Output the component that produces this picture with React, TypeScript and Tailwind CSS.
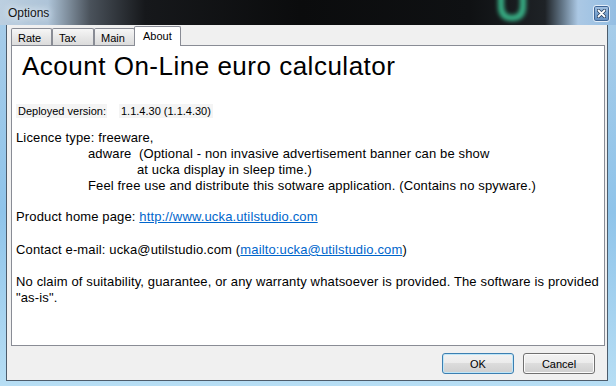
export default function App() {
  const tabs = [
    { name: "Rate", w: "w-[41px]" },
    { name: "Tax", w: "w-[42px]" },
    { name: "Main", w: "w-[41px]" },
  ]

  return (
    <div className="w-[616px] h-[386px] overflow-hidden flex flex-col bg-[linear-gradient(to_bottom,#a9cde9,#8fc4ea_55%,#b7def4)] font-['Liberation_Sans',Arial,sans-serif] text-black">
      {/* title bar */}
      <div className="relative h-[25px] shrink-0 bg-[linear-gradient(to_right,#bccfe0_0px,#aec4d8_48px,#4a525b_90px,#16181b_145px,#0b0c0d_300px,#0f1113_470px,#1e2226_545px,#667a8c_563px,#abc8e4_578px,#94bee3_616px)]">
        <span className="absolute left-[8px] top-[5px] text-[12px] leading-[16px] text-[#141414] [text-shadow:0_0_6px_#e8f0f8,0_0_10px_#e8f0f8]">
          Options
        </span>
        <svg className="absolute left-[495px] top-[-6px] blur-[2px] opacity-90" width="34" height="30" viewBox="0 0 34 30">
          <path d="M6 0 V12 Q6 24 17 24 Q28 24 28 12 V0" fill="none" stroke="#3cc393" strokeWidth="6" />
        </svg>
        <div className="absolute left-[593px] top-[5px] w-[17px] h-[17px] rounded-[3px] border border-[#e4eef8] bg-[linear-gradient(to_bottom,#a9c6e4,#7aa3cf_50%,#5f8cc0)] shadow-[inset_0_0_0_1px_#3e6595] flex items-center justify-center">
          <svg width="9" height="9" viewBox="0 0 9 9">
            <path d="M1.5 1.5 L7.5 7.5 M7.5 1.5 L1.5 7.5" stroke="#27405f" strokeWidth="3.4" strokeLinecap="round" />
            <path d="M1.5 1.5 L7.5 7.5 M7.5 1.5 L1.5 7.5" stroke="#ffffff" strokeWidth="1.8" strokeLinecap="round" />
          </svg>
        </div>
      </div>

      {/* client area */}
      <div className="ml-[6px] w-[602px] h-[356px] border-x border-b border-[#4d5c6b] bg-[#f0f0f0] flex flex-col">
        {/* tabs */}
        <div className="h-[20px] flex items-end pl-[4px]">
          {tabs.map((t) => (
            <div
              key={t.name}
              className={`${t.w} h-[17px] border-x border-t border-[#898c95] rounded-t-[2px] bg-[linear-gradient(to_bottom,#f6f6f6,#e8e8e8_50%,#dcdcdc)] pl-[6px] pt-[2px] text-[11px] leading-[14px]`}
            >
              {t.name}
            </div>
          ))}
          <div className="relative z-10 ml-[-1px] mb-[-1px] w-[47px] h-[20px] border-x border-t border-[#898c95] rounded-t-[2px] bg-white pl-[8px] pt-[2px] text-[11px] leading-[14px]">
            About
          </div>
        </div>

        {/* panel */}
        <div className="ml-[4px] w-[594px] h-[301px] border border-[#898c95] bg-white">
          <div className="mt-[6px] ml-[10px] text-[26px] leading-[28px] tracking-[0.5px] whitespace-nowrap">
            Acount On-Line euro calculator
          </div>

          <div className="mt-[24px] ml-[4px] flex text-[11px] leading-[14px] whitespace-nowrap">
            <span className="w-[91px] pl-[2px] bg-[#f4f4f4]">Deployed version:</span>
            <span className="ml-[12px] pl-[2px] pr-[2px] bg-[#f4f4f4]">1.1.4.30 (1.1.4.30)</span>
          </div>

          <div className="mt-[12px] ml-[4px] text-[13px] leading-[16px] tracking-[0.14px] whitespace-nowrap">
            <div>Licence type: freeware,</div>
            <div className="ml-[72px] whitespace-pre">adware  (Optional - non invasive advertisement banner can be show</div>
            <div className="ml-[121px]">at ucka display in sleep time.)</div>
            <div className="ml-[72px]">Feel free use and distribute this sotware application. (Contains no spyware.)</div>
          </div>

          <div className="mt-[15px] ml-[4px] text-[13px] leading-[16px] tracking-[0.14px] whitespace-nowrap">
            Product home page: <span className="text-[#0066cc] underline">http://www.ucka.utilstudio.com</span>
          </div>

          <div className="mt-[17px] ml-[4px] text-[13px] leading-[16px] tracking-[0.14px] whitespace-nowrap">
            Contact e-mail: ucka@utilstudio.com (
            <span className="text-[#0066cc] underline">mailto:ucka@utilstudio.com</span>)
          </div>

          <div className="mt-[16px] ml-[4px] text-[13px] leading-[16px] tracking-[0.14px] whitespace-nowrap">
            No claim of suitability, guarantee, or any warranty whatsoever is provided. The software is provided
            <br />
            "as-is".
          </div>
        </div>

        {/* buttons */}
        <div className="mt-[7px] flex justify-end gap-[9px] pr-[12px]">
          <button className="w-[72px] h-[21px] rounded-[3px] border border-[#3c7fb1] shadow-[inset_0_0_0_1px_#bfe6f8] bg-[linear-gradient(to_bottom,#f2f2f2,#ebebeb_50%,#dcdcdc_50%,#cfcfcf)] text-[11px] leading-[14px]">
            OK
          </button>
          <button className="w-[72px] h-[21px] rounded-[3px] border border-[#707070] shadow-[inset_0_0_0_1px_#fbfbfb] bg-[linear-gradient(to_bottom,#f2f2f2,#ebebeb_50%,#dddddd_50%,#cfcfcf)] text-[11px] leading-[14px]">
            Cancel
          </button>
        </div>
      </div>
    </div>
  )
}
